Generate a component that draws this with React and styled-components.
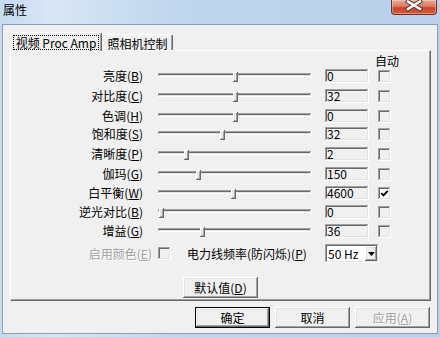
import React from 'react';
import styled, {createGlobalStyle, css} from 'styled-components';

const GlobalStyle = createGlobalStyle`
  body {
    margin: 0;
    font-family: "Noto Sans CJK SC", "Liberation Sans", sans-serif;
    font-size: 12px;
    color: #000000;
  }
`;

const raised = css`
  box-shadow: inset -1px -1px #696969, inset 1px 1px #ffffff,
    inset -2px -2px #a0a0a0, inset 2px 2px #e3e3e3;
`;
const sunken = css`
  box-shadow: inset -1px -1px #ffffff, inset 1px 1px #a0a0a0,
    inset -2px -2px #e3e3e3, inset 2px 2px #696969;
`;
const disabledText = css`
  color: #a0a0a0;
  text-shadow: 1px 1px 0 #ffffff;
`;

const Window = styled.div`
  box-sizing: border-box;
  display: flex;
  flex-direction: column;
  width: 440px;
  height: 337px;
  padding: 0 2px 3px 2px;
  background: linear-gradient(to right, #c6daf0 0%, #d8e6f5 12%, #c0d6ee 40%, #b8d0ea 100%);
`;
const TitleBar = styled.div`
  display: flex;
  justify-content: space-between;
  align-items: flex-start;
  height: 24px;
  flex-shrink: 0;
`;
const Title = styled.span`
  margin: 3px 0 0 1px;
  font-size: 12px;
  line-height: 13px;
`;
const CloseButton = styled.div`
  box-sizing: border-box;
  width: 46px;
  height: 15px;
  margin-right: 1px;
  border: 1px solid #7a2a1e;
  border-top: none;
  border-radius: 0 0 4px 4px;
  background: linear-gradient(#e8a996 0%, #db7a62 45%, #c8452c 55%, #d45c3e 100%);
  box-shadow: inset 0 0 0 1px rgba(255, 255, 255, 0.35);
  & svg {
    display: block;
  }
`;
const Client = styled.div`
  box-sizing: border-box;
  display: flex;
  flex-direction: column;
  flex: 1;
  padding: 7px 6px 0 7px;
  border: 1px solid #8e9cab;
  background: #f0f0f0;
`;
const TabStrip = styled.div`
  display: flex;
  align-items: flex-end;
  height: 18px;
  position: relative;
  z-index: 1;
`;
const Tab = styled.div`
  box-sizing: border-box;
  display: flex;
  align-items: stretch;
  width: ${(p) => p.$width}px;
  height: ${(p) => (p.$active ? 19 : 16)}px;
  margin-bottom: ${(p) => (p.$active ? -1 : 0)}px;
  padding: 2px 2px 1px 2px;
  border-left: 1px solid #ffffff;
  border-top: 1px solid #ffffff;
  border-right: 1px solid #696969;
  border-radius: 2px 2px 0 0;
  background: #f0f0f0;
  box-shadow: inset -1px 0 #a0a0a0;
  font-size: 12px;
  line-height: 13px;
  white-space: nowrap;
`;
const FocusRing = styled.span`
  display: flex;
  flex: 1;
  align-items: center;
  justify-content: center;
  border: 1px dotted ${(p) => (p.$focused ? '#000000' : 'transparent')};
`;
const Panel = styled.div`
  box-sizing: border-box;
  display: flex;
  flex-direction: column;
  height: 251px;
  border: 1px solid;
  border-color: #ffffff #696969 #696969 #ffffff;
  box-shadow: inset -1px -1px #a0a0a0;
`;
const ControlGrid = styled.div`
  display: grid;
  grid-template-columns: 132px 169px 57px 22px;
  grid-template-rows: 15px 20px 20px 18px 20px 20px 19px 19px 19px 19px;
  align-items: start;
`;
const AutoHeader = styled.span`
  grid-column: 4;
  margin: 4px 0 0 6px;
  line-height: 12px;
  white-space: nowrap;
`;
const Label = styled.span`
  margin-top: 3px;
  line-height: 14px;
  text-align: right;
  white-space: nowrap;
  ${(p) => p.$disabled && disabledText}
`;
const Accel = styled.u`
  text-decoration: underline;
  text-underline-offset: 1px;
`;
const Slider = styled.div`
  position: relative;
  justify-self: end;
  width: 154px;
  height: 10px;
  margin-top: 6px;
`;
const Track = styled.div`
  box-sizing: border-box;
  height: 4px;
  margin-top: 1px;
  ${sunken}
`;
const Thumb = styled.div`
  position: absolute;
  top: 0;
  width: 5px;
  height: 10px;
  background: #f0f0f0;
  ${raised}
`;
const EditBox = styled.div`
  box-sizing: border-box;
  justify-self: end;
  width: 44px;
  height: 14px;
  margin-top: 3px;
  padding: 0 2px;
  line-height: 14px;
  background: #f0f0f0;
  ${sunken}
`;
const CheckBox = styled.div`
  box-sizing: border-box;
  justify-self: end;
  width: 13px;
  height: 13px;
  margin-top: ${(p) => p.$top ?? 4}px;
  margin-left: ${(p) => p.$left ?? 0}px;
  padding: 2px;
  flex-shrink: 0;
  background: ${(p) => (p.$checked ? '#ffffff' : '#f0f0f0')};
  ${sunken}
  & svg {
    display: block;
  }
`;
const OptionRow = styled.div`
  display: flex;
  align-items: center;
  height: 19px;
  margin-top: 4px;
`;
const OptionLabel = styled.span`
  width: ${(p) => p.$width}px;
  margin-left: ${(p) => p.$left ?? 0}px;
  text-align: ${(p) => p.$align};
  line-height: 14px;
  white-space: nowrap;
  ${(p) => p.$disabled && disabledText}
`;
const Combo = styled.div`
  box-sizing: border-box;
  display: flex;
  width: 54px;
  height: 19px;
  padding: 2px;
  background: #ffffff;
  ${sunken}
`;
const ComboText = styled.span`
  flex: 1;
  padding-left: 1px;
  line-height: 15px;
`;
const ComboButton = styled.div`
  box-sizing: border-box;
  display: flex;
  align-items: center;
  justify-content: center;
  width: 12px;
  background: #f0f0f0;
  ${raised}
`;
const DefaultsRow = styled.div`
  display: flex;
  margin-top: 14px;
  padding-left: 172px;
`;
const Button = styled.div`
  box-sizing: border-box;
  display: flex;
  align-items: center;
  justify-content: center;
  width: 75px;
  height: 21px;
  background: #f0f0f0;
  white-space: nowrap;
  ${(p) => (p.$default
    ? css`box-shadow: inset 0 0 0 1px #000000, inset -2px -2px #696969, inset 2px 2px #ffffff,
        inset -3px -3px #a0a0a0, inset 3px 3px #e3e3e3;`
    : raised)}
  ${(p) => p.$disabled && disabledText}
`;
const Footer = styled.div`
  display: flex;
  justify-content: flex-end;
  gap: 5px;
  margin-top: 6px;
  padding-right: 1px;
`;

const controls = [
  {label: '亮度', key: 'B', value: '0', thumb: 75},
  {label: '对比度', key: 'C', value: '32', thumb: 75},
  {label: '色调', key: 'H', value: '0', thumb: 75},
  {label: '饱和度', key: 'S', value: '32', thumb: 62},
  {label: '清晰度', key: 'P', value: '2', thumb: 26},
  {label: '伽玛', key: 'G', value: '150', thumb: 38},
  {label: '白平衡', key: 'W', value: '4600', thumb: 73, auto: true},
  {label: '逆光对比', key: 'B', value: '0', thumb: 1},
  {label: '增益', key: 'G', value: '36', thumb: 42},
];

const CheckMark = () => (
  <svg width="9" height="9" viewBox="0 0 9 9">
    <polyline points="1.2,4 3.4,6.4 7.8,1.8" fill="none" stroke="#000000" strokeWidth="1.7" />
  </svg>
);

const App = () => (
  <>
    <GlobalStyle />
    <Window>
      <TitleBar>
        <Title>属性</Title>
        <CloseButton>
          <svg width="44" height="14" viewBox="0 0 44 14">
            <path d="M16 1.5 L28 9 M28 1.5 L16 9" stroke="#5a2a22" strokeWidth="4.4" strokeLinecap="square" />
            <path d="M16 1.5 L28 9 M28 1.5 L16 9" stroke="#ffffff" strokeWidth="2.6" strokeLinecap="square" />
          </svg>
        </CloseButton>
      </TitleBar>
      <Client>
        <TabStrip>
          <Tab $active $width={92}>
            <FocusRing $focused>视频 Proc Amp</FocusRing>
          </Tab>
          <Tab $width={71}>
            <FocusRing>照相机控制</FocusRing>
          </Tab>
        </TabStrip>
        <Panel>
          <ControlGrid>
            <AutoHeader>自动</AutoHeader>
            {controls.map((c) => (
              <React.Fragment key={c.label}>
                <Label>
                  {c.label}(<Accel>{c.key}</Accel>)
                </Label>
                <Slider>
                  <Track />
                  <Thumb style={{left: c.thumb}} />
                </Slider>
                <EditBox>{c.value}</EditBox>
                <CheckBox $checked={c.auto}>{c.auto && <CheckMark />}</CheckBox>
              </React.Fragment>
            ))}
          </ControlGrid>
          <OptionRow>
            <OptionLabel $width={141} $align="right" $disabled>
              启用颜色(<Accel>E</Accel>)
            </OptionLabel>
            <CheckBox $top={0} $left={6} />
            <OptionLabel $width={138} $left={16} $align="left">
              电力线频率(防闪烁)(<Accel>P</Accel>)
            </OptionLabel>
            <Combo>
              <ComboText>50 Hz</ComboText>
              <ComboButton>
                <svg width="7" height="4" viewBox="0 0 7 4">
                  <polygon points="0,0 7,0 3.5,4" fill="#000000" />
                </svg>
              </ComboButton>
            </Combo>
          </OptionRow>
          <DefaultsRow>
            <Button>
              默认值(<Accel>D</Accel>)
            </Button>
          </DefaultsRow>
        </Panel>
        <Footer>
          <Button $default>确定</Button>
          <Button>取消</Button>
          <Button $disabled>
            应用(<Accel>A</Accel>)
          </Button>
        </Footer>
      </Client>
    </Window>
  </>
);

export default App;
